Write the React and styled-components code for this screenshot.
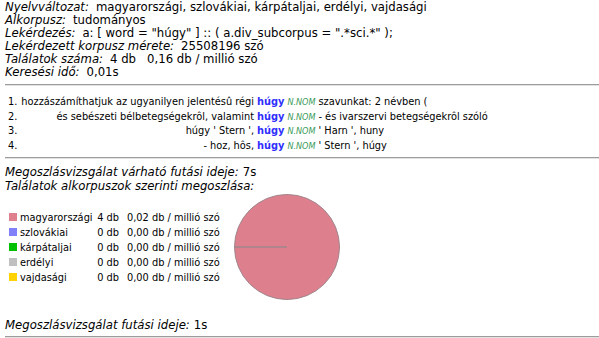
import React from 'react';
import styled, { createGlobalStyle } from 'styled-components';

const GlobalStyle = createGlobalStyle`
  body {
    margin: 0;
    background: #fff;
    color: #000;
    font-family: "DejaVu Sans", Verdana, sans-serif;
    font-size: 11.7px;
  }
`;

const narrow = `
  font-family: "DejaVu Sans Condensed", "DejaVu Sans", Tahoma, sans-serif;
  font-stretch: condensed;
`;

const Page = styled.div`
  padding: 1px 0 0 5px;
`;

const InfoLine = styled.div`
  line-height: 13px;
  white-space: nowrap;
`;

const Label = styled.span`
  font-style: italic;
  margin-right: 7px;
`;

const Rule = styled.div`
  height: 0;
  border-top: 1px solid #9c9c9c;
  border-bottom: 1px solid #e2e2e2;
  margin: ${p => p.$top}px 0 ${p => p.$bottom}px;
`;

const HitTable = styled.table`
  ${narrow}
  border-collapse: collapse;
  margin-left: 3px;
  font-size: 10.9px;
  td {
    padding: 0;
    height: 14.5px;
    line-height: 14px;
    white-space: nowrap;
  }
`;

const Num = styled.td`
  padding-right: 4px !important;
`;

const LeftCtx = styled.td`
  text-align: right;
  padding-right: 3px !important;
`;

const Keyword = styled.span`
  color: #2f2fff;
  font-weight: bold;
`;

const Tag = styled.span`
  color: #3a9a58;
  font-style: italic;
  font-size: 9px;
  margin: 0 3px;
`;

const Heading = styled.div`
  line-height: 14px;
  font-style: italic;
  white-space: nowrap;
`;

const Plain = styled.span`
  font-style: normal;
  margin-left: 4px;
`;

const Distribution = styled.div`
  display: flex;
  align-items: center;
`;

const Legend = styled.div`
  ${narrow}
  font-size: 10.9px;
  display: grid;
  grid-template-columns: 87px 23px 108px;
  grid-auto-rows: 15px;
  align-items: center;
  margin-left: 4px;
  white-space: nowrap;
`;

const Corpus = styled.div`
  display: flex;
  align-items: center;
  gap: 3px;
`;

const Swatch = styled.span`
  width: 8px;
  height: 8px;
  background: ${p => p.$color};
  flex: none;
`;

const Count = styled.div`
  text-align: right;
`;

const Rate = styled.div`
  padding-left: 8px;
`;

const Pie = styled.svg`
  margin-left: 6px;
  display: block;
  flex: none;
`;

const Footer = styled.div`
  margin-top: 17px;
  line-height: 14px;
  font-style: italic;
  white-space: nowrap;
`;

const info = [
  ['Nyelvváltozat:', 'magyarországi, szlovákiai, kárpátaljai, erdélyi, vajdasági'],
  ['Alkorpusz:', 'tudományos'],
  ['Lekérdezés:', 'a: [ word = "húgy" ] :: ( a.div_subcorpus = ".*sci.*" );'],
  ['Lekérdezett korpusz mérete:', '25508196 szó'],
  ['Találatok száma:', '4 db\u00a0\u00a0\u00a00,16 db / millió szó'],
  ['Keresési idő:', '0,01s'],
];

const hits = [
  ['1.', 'hozzászámíthatjuk az ugyanilyen jelentésû régi', 'szavunkat: 2 névben ('],
  ['2.', 'és sebészeti bélbetegségekrôl, valamint', '- és ivarszervi betegségekrôl szóló'],
  ['3.', "húgy ' Stern ',", "' Harn ', huny"],
  ['4.', '- hoz, hôs,', "' Stern ', húgy"],
];

const corpora = [
  { name: 'magyarországi', color: '#e0808f', count: '4 db', rate: '0,02 db / millió szó' },
  { name: 'szlovákiai', color: '#8080f8', count: '0 db', rate: '0,00 db / millió szó' },
  { name: 'kárpátaljai', color: '#00c000', count: '0 db', rate: '0,00 db / millió szó' },
  { name: 'erdélyi', color: '#c0c0c0', count: '0 db', rate: '0,00 db / millió szó' },
  { name: 'vajdasági', color: '#ffd200', count: '0 db', rate: '0,00 db / millió szó' },
];

export default function App() {
  return (
    <Page>
      <GlobalStyle />
      {info.map(([label, value]) => (
        <InfoLine key={label}>
          <Label>{label}</Label>
          {value}
        </InfoLine>
      ))}
      <Rule $top={5} $bottom={9} />
      <HitTable>
        <tbody>
          {hits.map(([n, left, right]) => (
            <tr key={n}>
              <Num>{n}</Num>
              <LeftCtx>{left}</LeftCtx>
              <td>
                <Keyword>húgy</Keyword>
                <Tag>N.NOM</Tag>
                {right}
              </td>
            </tr>
          ))}
        </tbody>
      </HitTable>
      <Rule $top={4} $bottom={6} />
      <Heading>
        Megoszlásvizsgálat várható futási ideje:<Plain>7s</Plain>
      </Heading>
      <Heading>Találatok alkorpuszok szerinti megoszlása:</Heading>
      <Distribution>
        <Legend>
          {corpora.map(c => (
            <React.Fragment key={c.name}>
              <Corpus>
                <Swatch $color={c.color} />
                {c.name}
              </Corpus>
              <Count>{c.count}</Count>
              <Rate>{c.rate}</Rate>
            </React.Fragment>
          ))}
        </Legend>
        <Pie width="108" height="108" viewBox="0 0 108 108">
          <circle cx="54" cy="54" r="52.5" fill="#de7f8e" stroke="#a0868c" strokeWidth="1" />
          <line x1="1.5" y1="54" x2="54" y2="54" stroke="#a0868c" strokeWidth="1.5" />
        </Pie>
      </Distribution>
      <Footer>
        Megoszlásvizsgálat futási ideje:<Plain>1s</Plain>
      </Footer>
      <Rule $top={4} $bottom={0} />
    </Page>
  );
}
